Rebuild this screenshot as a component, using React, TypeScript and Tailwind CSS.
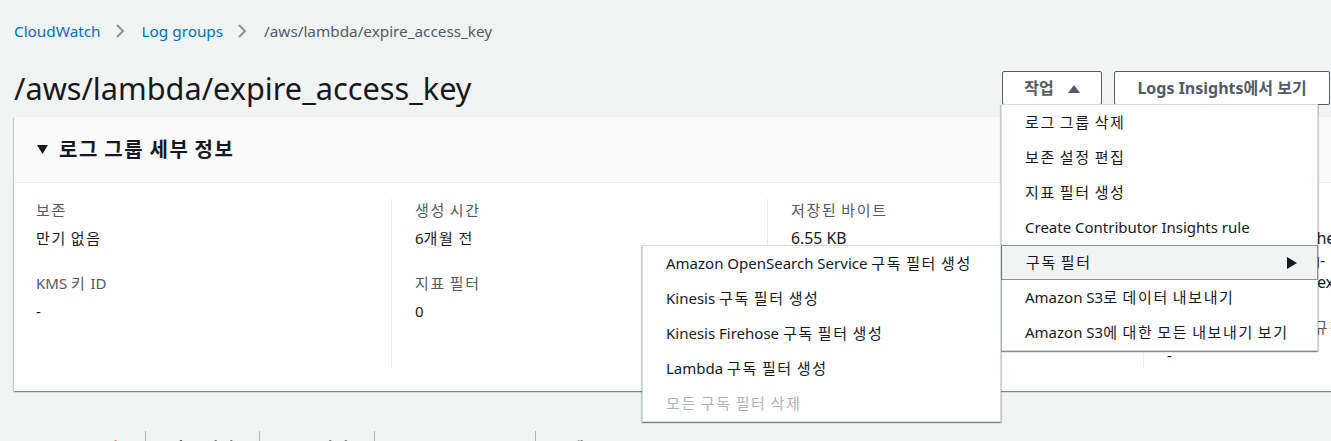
import React from "react";

const font = "font-['Noto_Sans','Noto_Sans_CJK_KR',sans-serif]";

function K({ t, wide }: { t: string; wide?: boolean }) {
  const parts = t.split(/([\uAC00-\uD7A3\u3131-\u318E]+)/);
  return (
    <span>
      {parts.map((p, i) =>
        i % 2 === 1 ? (
          <span key={i} className={wide ? "tracking-[0.08em]" : "tracking-[0.11em]"}>
            {p}
          </span>
        ) : (
          <React.Fragment key={i}>{p}</React.Fragment>
        )
      )}
    </span>
  );
}

function Chevron() {
  return (
    <svg width="10" height="16" viewBox="0 0 10 16" className="ml-[14px] mr-[17px]">
      <path d="M2 2 L8 8 L2 14" fill="none" stroke="#879596" strokeWidth="2" />
    </svg>
  );
}

function Field({ label, children }: { label: string; children: React.ReactNode }) {
  return (
    <div>
      <div className="text-[15px] leading-[22px] text-[#545b64]">
        <K t={label} />
      </div>
      <div className="mt-[6px] text-[15px] leading-[22px] text-[#16191f]">{children}</div>
    </div>
  );
}

const mainItems = [
  "로그 그룹 삭제",
  "보존 설정 편집",
  "지표 필터 생성",
  "Create Contributor Insights rule",
];
const afterItems = ["Amazon S3로 데이터 내보내기", "Amazon S3에 대한 모든 내보내기 보기"];
const subItems = [
  "Amazon OpenSearch Service 구독 필터 생성",
  "Kinesis 구독 필터 생성",
  "Kinesis Firehose 구독 필터 생성",
  "Lambda 구독 필터 생성",
];

const menuShadow =
  "shadow-[0_1px_1px_0_rgba(0,28,36,0.3),1px_1px_1px_0_rgba(0,28,36,0.15),-1px_1px_1px_0_rgba(0,28,36,0.15)]";

export default function App() {
  return (
    <div className={`${font} relative w-[1331px] h-[441px] overflow-hidden bg-[#f2f3f3] text-[#16191f]`}>
      {/* breadcrumb */}
      <div className="pt-[21px] pl-[14px] flex items-center h-[41px] text-[15.3px] leading-[20px]">
        <span className="text-[#0073bb]">CloudWatch</span>
        <Chevron />
        <span className="text-[#0073bb]">Log groups</span>
        <Chevron />
        <span className="text-[#545b64]">/aws/lambda/expire_access_key</span>
      </div>

      {/* header */}
      <div className="mt-[30px] pl-[14px] pr-[1px] flex items-center justify-between h-[34px]">
        <h1 className="text-[30.7px] leading-[36px] font-normal text-[#16191f]">/aws/lambda/expire_access_key</h1>
        <div className="flex items-center gap-[12px] relative z-20">
          <div className="relative">
            <button className="w-[100px] h-[34px] border border-[#545b64] rounded-[2px] bg-white text-[16px] font-bold text-[#545b64] flex items-center justify-center gap-[14px]">
              <span>작업</span>
              <svg width="12" height="9" viewBox="0 0 12 9">
                <path d="M0 9 L6 1 L12 9 Z" fill="#545b64" />
              </svg>
            </button>
            {/* dropdown */}
            <div className={`absolute left-[-1px] top-[33px] w-[317px] bg-white border border-[#d5dbdb] ${menuShadow}`}>
              {mainItems.map((t) => (
                <div key={t} className="h-[35px] px-[23px] flex items-center text-[15px] text-[#16191f] whitespace-nowrap">
                  <K t={t} />
                </div>
              ))}
              <div className="relative">
                <div className="-mx-px h-[35px] pl-[24px] pr-[20px] flex items-center justify-between bg-[#f2f3f3] border border-[#879596] text-[15px] text-[#16191f]">
                  <K t="구독 필터" />
                  <svg width="10" height="12" viewBox="0 0 10 12">
                    <path d="M0 0 L10 6 L0 12 Z" fill="#16191f" />
                  </svg>
                </div>
                {/* submenu */}
                <div className={`absolute right-full top-0 mr-[1px] w-[359px] bg-white border border-[#d5dbdb] ${menuShadow}`}>
                  {subItems.map((t) => (
                    <div key={t} className="h-[35px] px-[23px] flex items-center text-[15px] text-[#16191f] whitespace-nowrap">
                      <K t={t} />
                    </div>
                  ))}
                  <div className="h-[35px] px-[23px] flex items-center text-[15px] text-[#aab7b8] whitespace-nowrap">
                    <K t="모든 구독 필터 삭제" />
                  </div>
                </div>
              </div>
              {afterItems.map((t) => (
                <div key={t} className="h-[35px] px-[23px] flex items-center text-[15px] text-[#16191f] whitespace-nowrap">
                  <K t={t} />
                </div>
              ))}
            </div>
          </div>
          <button className="w-[216px] h-[34px] border border-[#545b64] rounded-[2px] bg-white text-[16px] font-bold text-[#545b64] flex items-center justify-center">
            Logs Insights에서 보기
          </button>
        </div>
      </div>

      {/* card */}
      <div className={`mt-[12px] ml-[14px] w-[1560px] bg-white ${menuShadow}`}>
        <div className="h-[66px] bg-[#fafafa] border-b border-[#eaeded] px-[23px] flex items-center">
          <svg width="11" height="9" viewBox="0 0 11 9" className="mr-[11px]">
            <path d="M0 0 L11 0 L5.5 9 Z" fill="#16191f" />
          </svg>
          <span className="text-[20px] font-bold text-[#16191f]">
            <K t="로그 그룹 세부 정보" wide />
          </span>
        </div>
        <div className="pt-[16px] pb-[23px] flex items-start">
          <div className="w-[377px] h-[169px] pl-[22px] flex flex-col gap-[23px]">
            <Field label="보존">
              <K t="만기 없음" />
            </Field>
            <Field label="KMS 키 ID">-</Field>
          </div>
          <div className="w-[376px] h-[169px] pl-[23px] border-l border-[#eaeded] flex flex-col gap-[23px]">
            <Field label="생성 시간">
              <K t="6개월 전" />
            </Field>
            <Field label="지표 필터">0</Field>
          </div>
          <div className="w-[376px] h-[169px] pl-[23px] border-l border-[#eaeded] flex flex-col gap-[23px]">
            <Field label="저장된 바이트">
              <span className="text-[15.8px]">6.55 KB</span>
            </Field>
            <Field label="구독 필터">0</Field>
          </div>
          <div className="w-[376px] h-[169px] pl-[23px] pr-[20px] border-l border-[#eaeded] flex flex-col gap-[23px]">
            <Field label="ARN">
              <span className="text-[16.2px]">
                <span className="tracking-[-0.35px]">arn:aws:logs:ap-northeast-</span>
                <br />
                2:123456789012:log-
                <br />
                <span className="tracking-[-0.3px]">group:/aws/lambda/expire_access_key:*</span>
              </span>
            </Field>
            <Field label="Contributor Insights 규칙">-</Field>
          </div>
        </div>
      </div>

      {/* tabs */}
      <div className="mt-[40px] ml-[14px] flex text-[15px] leading-[20px] h-[20px]">
        <div className="w-[131px] pt-[6px] text-center font-bold text-[#ec7211]">
          <K t="로그 스트림" />
        </div>
        <div className="w-[114px] pt-[6px] text-center border-l border-[#aab7b8] text-[#545b64] font-bold">
          <K t="지표 필터" />
        </div>
        <div className="w-[115px] pt-[6px] text-center border-l border-[#aab7b8] text-[#545b64] font-bold">
          <K t="구독 필터" />
        </div>
        <div className="w-[161px] pt-[6px] text-center border-l border-[#aab7b8] text-[#545b64] font-bold">Contributor Insights</div>
        <div className="w-[100px] pt-[6px] text-center border-l border-[#aab7b8] text-[#545b64] font-bold">
          <K t="태그" />
        </div>
      </div>
    </div>
  );
}
